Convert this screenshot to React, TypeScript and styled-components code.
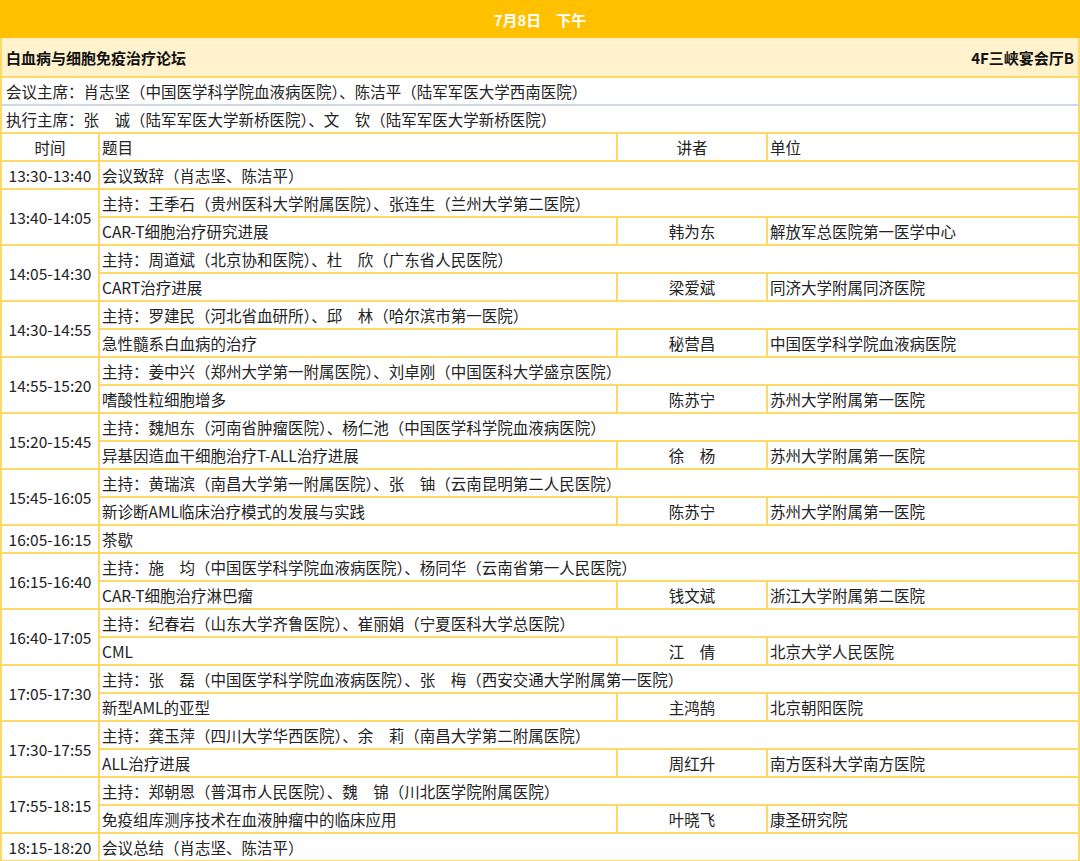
import React from 'react';
import styled, {createGlobalStyle} from 'styled-components';

const Global = createGlobalStyle`
  body { margin: 0; background: #fff; font-family: "Noto Sans CJK SC", "Noto Sans", sans-serif; color: #222; }
`;

type Session = {time: string; host: string; topic: string; speaker: string; unit: string};

const sessions: Session[] = [
  {time: '13:40-14:05', host: '主持：王季石（贵州医科大学附属医院）、张连生（兰州大学第二医院）', topic: 'CAR-T细胞治疗研究进展', speaker: '韩为东', unit: '解放军总医院第一医学中心'},
  {time: '14:05-14:30', host: '主持：周道斌（北京协和医院）、杜　欣（广东省人民医院）', topic: 'CART治疗进展', speaker: '梁爱斌', unit: '同济大学附属同济医院'},
  {time: '14:30-14:55', host: '主持：罗建民（河北省血研所）、邱　林（哈尔滨市第一医院）', topic: '急性髓系白血病的治疗', speaker: '秘营昌', unit: '中国医学科学院血液病医院'},
  {time: '14:55-15:20', host: '主持：姜中兴（郑州大学第一附属医院）、刘卓刚（中国医科大学盛京医院）', topic: '嗜酸性粒细胞增多', speaker: '陈苏宁', unit: '苏州大学附属第一医院'},
  {time: '15:20-15:45', host: '主持：魏旭东（河南省肿瘤医院）、杨仁池（中国医学科学院血液病医院）', topic: '异基因造血干细胞治疗T-ALL治疗进展', speaker: '徐　杨', unit: '苏州大学附属第一医院'},
  {time: '15:45-16:05', host: '主持：黄瑞滨（南昌大学第一附属医院）、张　铀（云南昆明第二人民医院）', topic: '新诊断AML临床治疗模式的发展与实践', speaker: '陈苏宁', unit: '苏州大学附属第一医院'},
];

const sessions2: Session[] = [
  {time: '16:15-16:40', host: '主持：施　均（中国医学科学院血液病医院）、杨同华（云南省第一人民医院）', topic: 'CAR-T细胞治疗淋巴瘤', speaker: '钱文斌', unit: '浙江大学附属第二医院'},
  {time: '16:40-17:05', host: '主持：纪春岩（山东大学齐鲁医院）、崔丽娟（宁夏医科大学总医院）', topic: 'CML', speaker: '江　倩', unit: '北京大学人民医院'},
  {time: '17:05-17:30', host: '主持：张　磊（中国医学科学院血液病医院）、张　梅（西安交通大学附属第一医院）', topic: '新型AML的亚型', speaker: '主鸿鹄', unit: '北京朝阳医院'},
  {time: '17:30-17:55', host: '主持：龚玉萍（四川大学华西医院）、余　莉（南昌大学第二附属医院）', topic: 'ALL治疗进展', speaker: '周红升', unit: '南方医科大学南方医院'},
  {time: '17:55-18:15', host: '主持：郑朝恩（普洱市人民医院）、魏　锦（川北医学院附属医院）', topic: '免疫组库测序技术在血液肿瘤中的临床应用', speaker: '叶晓飞', unit: '康圣研究院'},
];

const Page = styled.div`
  width: 1080px;
  height: 861px;
  overflow: hidden;
`;

const TopBar = styled.div`
  height: 38px;
  background: #ffc000;
  color: #fff;
  font-weight: 700;
  font-size: 15px;
  display: flex;
  align-items: center;
  justify-content: center;
`;

const TitleRow = styled.div`
  height: 38px;
  background: #fff2cc;
  border-left: 2px solid #ffd966;
  border-right: 2px solid #ffd966;
  display: flex;
  align-items: center;
  justify-content: space-between;
  padding: 0 4px;
  font-weight: 700;
  font-size: 15px;
  color: #111;
`;

const ChairRow = styled.div<{$last?: boolean}>`
  height: 28px;
  box-sizing: border-box;
  border-left: 2px solid #ffd966;
  border-right: 2px solid #ffd966;
  border-top: 2px solid ${p => (p.$last ? '#d0d7e5' : '#ffd966')};
  display: flex;
  align-items: center;
  padding: 0 4px;
  font-size: 15.5px;
`;

const Table = styled.table`
  width: 1080px;
  border-collapse: collapse;
  table-layout: fixed;
  font-size: 15.5px;
`;

const Cell = styled.td<{$center?: boolean}>`
  height: 26px;
  padding: 0 2px;
  border: 2px solid #ffd966;
  text-align: ${p => (p.$center ? 'center' : 'left')};
  white-space: nowrap;
  overflow: hidden;
  line-height: 26px;
`;

const SessionRows = ({s}: {s: Session}) => (
  <>
    <tr>
      <Cell $center rowSpan={2}>{s.time}</Cell>
      <Cell colSpan={3}>{s.host}</Cell>
    </tr>
    <tr>
      <Cell>{s.topic}</Cell>
      <Cell $center>{s.speaker}</Cell>
      <Cell>{s.unit}</Cell>
    </tr>
  </>
);

export default function App() {
  return (
    <Page>
      <Global />
      <TopBar>7月8日　下午</TopBar>
      <TitleRow>
        <span>白血病与细胞免疫治疗论坛</span>
        <span>4F三峡宴会厅B</span>
      </TitleRow>
      <ChairRow>会议主席：肖志坚（中国医学科学院血液病医院）、陈洁平（陆军军医大学西南医院）</ChairRow>
      <ChairRow $last>执行主席：张　诚（陆军军医大学新桥医院）、文　钦（陆军军医大学新桥医院）</ChairRow>
      <Table>
        <colgroup>
          <col style={{width: 98}} />
          <col style={{width: 518}} />
          <col style={{width: 150}} />
          <col />
        </colgroup>
        <tbody>
          <tr>
            <Cell $center>时间</Cell>
            <Cell>题目</Cell>
            <Cell $center>讲者</Cell>
            <Cell>单位</Cell>
          </tr>
          <tr>
            <Cell $center>13:30-13:40</Cell>
            <Cell colSpan={3}>会议致辞（肖志坚、陈洁平）</Cell>
          </tr>
          {sessions.map(s => <SessionRows key={s.time} s={s} />)}
          <tr>
            <Cell $center>16:05-16:15</Cell>
            <Cell colSpan={3}>茶歇</Cell>
          </tr>
          {sessions2.map(s => <SessionRows key={s.time} s={s} />)}
          <tr>
            <Cell $center>18:15-18:20</Cell>
            <Cell colSpan={3}>会议总结（肖志坚、陈洁平）</Cell>
          </tr>
        </tbody>
      </Table>
    </Page>
  );
}
